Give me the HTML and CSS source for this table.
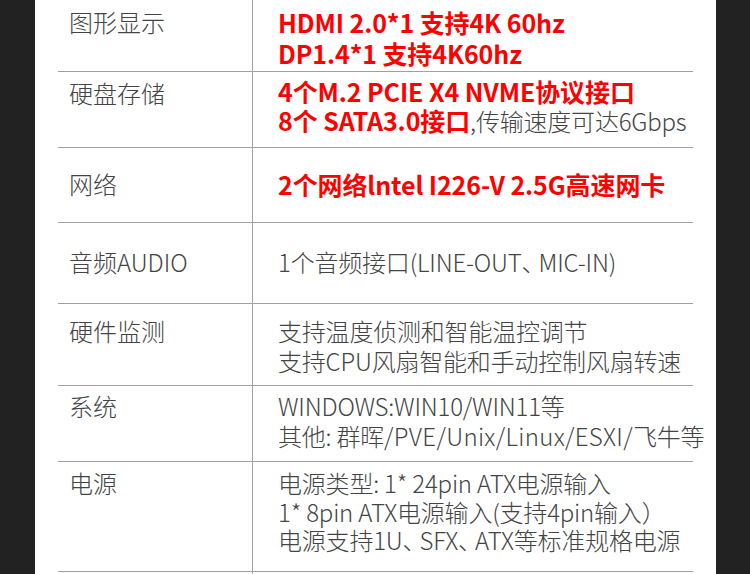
FILE: index.html
```html
<!DOCTYPE html>
<html lang="zh-CN">
<head>
<meta charset="utf-8">
<link rel="stylesheet" href="styles.css">
</head>
<body>
<div class="page">
  <div class="spec">
    <div class="row r0">
      <div class="label">图形显示</div>
      <div class="value"><span class="hl">HDMI 2.0*1 支持4K 60hz</span><br><span class="hl">DP1.4*1 支持4K60hz</span></div>
    </div>
    <div class="row r1">
      <div class="label">硬盘存储</div>
      <div class="value"><span class="hl">4个M.2 PCIE X4 NVME协议接口</span><br><span class="hl">8个 SATA3.0接口</span>,传输速度可达6Gbps</div>
    </div>
    <div class="row r2 mid">
      <div class="label">网络</div>
      <div class="value"><span class="hl">2个网络lntel I226-V 2.5G高速网卡</span></div>
    </div>
    <div class="row r3 mid">
      <div class="label">音频AUDIO</div>
      <div class="value"><span>1个音频接口(LINE-OUT<span class="dun">、</span>MIC-IN)</span></div>
    </div>
    <div class="row r4">
      <div class="label">硬件监测</div>
      <div class="value">支持温度侦测和智能温控调节<br>支持CPU风扇智能和手动控制风扇转速</div>
    </div>
    <div class="row r5">
      <div class="label">系统</div>
      <div class="value">WINDOWS:WIN10/WIN11等<br>其他: 群晖<span class="wide">/PVE/Unix/Linux/ESXI/</span>飞牛等</div>
    </div>
    <div class="row r6">
      <div class="label">电源</div>
      <div class="value">电源类型: 1* 24pin ATX电源输入<br>1* 8pin ATX电源输入(支持4pin输入）<br>电源支持1U<span class="dun">、</span>SFX<span class="dun">、</span>ATX等标准规格电源</div>
    </div>
    <div class="row tail">
      <div class="label"></div>
      <div class="value"></div>
    </div>
  </div>
</div>
</body>
</html>
```

FILE: styles.css
```css
html, body {
  margin: 0;
  padding: 0;
  background: #222222;
}
body {
  width: 750px;
  height: 574px;
  overflow: hidden;
}
.page {
  margin-left: 35px;
  width: 681px;
  height: 574px;
  background: #ffffff;
  padding: 0 23px;
  box-sizing: border-box;
  font-family: "Noto Sans CJK SC", "Noto Sans", sans-serif;
  font-size: 24px;
  font-weight: 300;
  color: #444444;
}
.spec {
  display: flex;
  flex-direction: column;
}
.row {
  display: grid;
  grid-template-columns: 195px 1fr;
  border-bottom: 1px solid #a0a0a0;
  box-sizing: border-box;
  line-height: 30px;
}
.label {
  border-right: 1px solid #a0a0a0;
  padding-left: 11px;
  white-space: nowrap;
}
.value {
  padding-left: 25px;
  white-space: nowrap;
  letter-spacing: -0.2px;
}
.hl {
  color: #ff0000;
  font-weight: 700;
  font-size: 25px;
  letter-spacing: -0.1px;
}
.dun {
  letter-spacing: -7px;
}
.wide {
  letter-spacing: 0.3px;
}
.r0 { height: 72px; }
.r0 .label, .r0 .value { padding-top: 7px; }
.r1 { height: 76px; line-height: 29px; }
.r1 .label { padding-top: 6px; }
.r1 .value { padding-top: 5px; }
.mid .label, .mid .value {
  display: flex;
  align-items: center;
  padding-bottom: 3px;
}
.r2 { height: 75px; }
.r3 { height: 81px; }
.r4 { height: 82px; }
.r4 .label, .r4 .value { padding-top: 12px; }
.r5 { height: 76px; }
.r5 .label, .r5 .value { padding-top: 5px; }
.r6 { height: 110px; line-height: 28.5px; }
.r6 .label, .r6 .value { padding-top: 7px; }
.tail {
  height: 10px;
  border-bottom: none;
}
```
